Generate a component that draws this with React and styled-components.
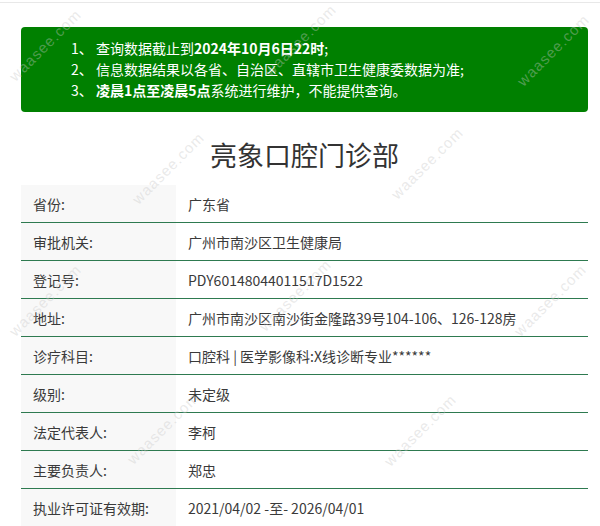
import React from "react";
import styled, { createGlobalStyle } from "styled-components";

const Global = createGlobalStyle`
  html, body { margin: 0; padding: 0; background: #fff; }
  body { font-family: "Noto Sans CJK SC", "Noto Sans", sans-serif; color: #333; }
`;

const Page = styled.div`
  position: relative;
  width: 600px;
  height: 526px;
  overflow: hidden;
  padding-top: 2px;
  box-sizing: border-box;
`;

const TopRule = styled.div`
  height: 1px;
  background: #e8e8e8;
`;

const Content = styled.div`
  margin: 24px 12px 0 21px;
`;

const Notice = styled.div`
  background: #008000;
  border-radius: 4px;
  padding: 11px 0 11px 50px;
  color: #fff;
  font-size: 14px;
  line-height: 21px;
`;

const NoticeLine = styled.div`
  white-space: nowrap;
`;

const Strong = styled.b`
  font-weight: 700;
`;

const Title = styled.h1`
  margin: 25px 0 12px;
  text-align: center;
  font-size: 27px;
  line-height: 36px;
  font-weight: 400;
  color: #333;
`;

const Table = styled.div`
  display: flex;
  flex-direction: column;
`;

const Row = styled.div`
  display: grid;
  grid-template-columns: 155px 1fr;
  height: 37px;
  border-bottom: 1px solid #2e7a50;
  font-size: 14px;
`;

const Label = styled.div`
  background: #f8f8f8;
  padding-left: 12px;
  display: flex;
  align-items: center;
  color: #3a3a3a;
`;

const Value = styled.div`
  padding-left: 12px;
  display: flex;
  align-items: center;
  color: #3a3a3a;
  white-space: nowrap;
`;

const Marks = styled.div`
  position: absolute;
  inset: 0;
  pointer-events: none;
`;

const Mark = styled.span`
  position: absolute;
  font-family: "Liberation Sans", sans-serif;
  font-size: 15px;
  letter-spacing: 1px;
  color: rgba(200, 200, 200, 0.4);
  transform: translate(-50%, -50%) rotate(-45deg);
  white-space: nowrap;
`;

const rows = [
  ["省份:", "广东省"],
  ["审批机关:", "广州市南沙区卫生健康局"],
  ["登记号:", "PDY60148044011517D1522"],
  ["地址:", "广州市南沙区南沙街金隆路39号104-106、126-128房"],
  ["诊疗科目:", "口腔科 | 医学影像科:X线诊断专业******"],
  ["级别:", "未定级"],
  ["法定代表人:", "李柯"],
  ["主要负责人:", "郑忠"],
  ["执业许可证有效期:", "2021/04/02 -至- 2026/04/01"],
];

const marks = [
  [45, 45], [300, 40], [553, 50],
  [168, 168], [427, 163],
  [45, 300], [295, 295], [550, 300],
  [163, 428], [420, 430],
];

export default function App() {
  return (
    <>
      <Global />
      <Page>
        <TopRule />
        <Content>
          <Notice>
            <NoticeLine>1、 查询数据截止到<Strong>2024年10月6日22时</Strong>;</NoticeLine>
            <NoticeLine>2、 信息数据结果以各省、自治区、直辖市卫生健康委数据为准;</NoticeLine>
            <NoticeLine>3、 <Strong>凌晨1点至凌晨5点</Strong>系统进行维护，不能提供查询。</NoticeLine>
          </Notice>
          <Title>亮象口腔门诊部</Title>
          <Table>
            {rows.map(([k, v]) => (
              <Row key={k}>
                <Label>{k}</Label>
                <Value>{v}</Value>
              </Row>
            ))}
          </Table>
        </Content>
        <Marks>
          {marks.map(([x, y], i) => (
            <Mark key={i} style={{ left: x, top: y }}>waasee.com</Mark>
          ))}
        </Marks>
      </Page>
    </>
  );
}
